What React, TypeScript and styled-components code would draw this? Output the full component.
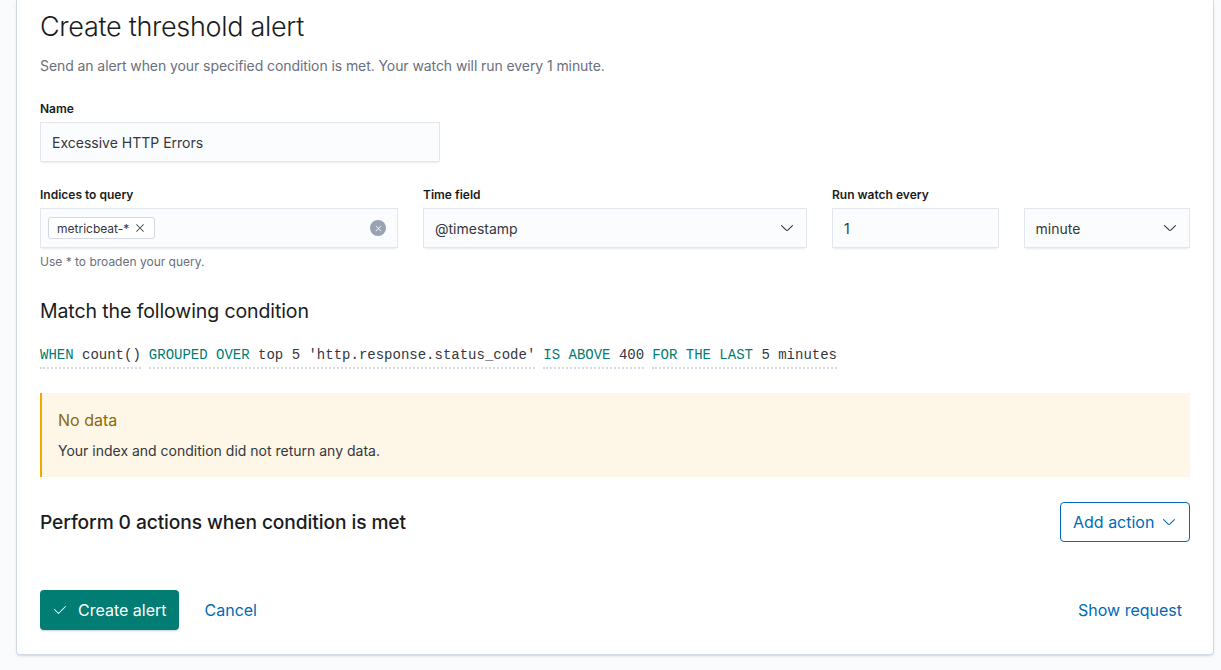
import React from 'react';
import styled, { createGlobalStyle } from 'styled-components';

const GlobalStyle = createGlobalStyle`
  html, body {
    margin: 0;
    padding: 0;
    background: #fafbfd;
  }
  body {
    font-family: Inter, 'Noto Sans', 'Liberation Sans', sans-serif;
    color: #343741;
    -webkit-font-smoothing: antialiased;
  }
  * {
    box-sizing: border-box;
  }
`;

const Page = styled.div`
  padding: 0 7px 16px 16px;
`;

const Panel = styled.div`
  background: #fff;
  border: 1px solid #d3dae6;
  border-top: none;
  border-radius: 0 0 4px 4px;
  box-shadow: 0 2px 2px -1px rgba(152, 162, 179, 0.3), 0 1px 5px -2px rgba(152, 162, 179, 0.3);
  padding: 9px 23px 24px 23px;
`;

const Title = styled.h1`
  margin: 0;
  font-size: 27px;
  line-height: 36px;
  font-weight: 300;
  color: #1a1c21;
  letter-spacing: -0.3px;
`;

const Subtitle = styled.p`
  margin: 10px 0 0 0;
  font-size: 14px;
  line-height: 21px;
  color: #69707d;
  letter-spacing: -0.08px;
`;

const FormRow = styled.div<{ $top: number; $width?: number }>`
  margin-top: ${p => p.$top}px;
  width: ${p => (p.$width ? `${p.$width}px` : 'auto')};
  display: flex;
  flex-direction: column;
`;

const Label = styled.label`
  font-size: 12px;
  line-height: 18px;
  font-weight: 600;
  color: #1a1c21;
  margin-bottom: 4px;
`;

const Field = styled.div`
  height: 40px;
  background: #fbfcfd;
  box-shadow: 0 1px 1px -1px rgba(152, 162, 179, 0.2), 0 3px 2px -2px rgba(152, 162, 179, 0.2),
    inset 0 0 0 1px rgba(15, 39, 118, 0.1);
  display: flex;
  align-items: center;
  padding: 0 12px;
  font-size: 14px;
  color: #343741;
  gap: 8px;
`;

const FieldText = styled.span`
  flex: 1;
  white-space: nowrap;
`;

const Combo = styled(Field)`
  padding: 0 12px 0 8px;
`;

const Pill = styled.span`
  display: inline-flex;
  align-items: center;
  height: 22px;
  padding: 0 8px;
  gap: 5px;
  background: #fff;
  border: 1px solid #d3dae6;
  border-radius: 3px;
  font-size: 12px;
  color: #343741;
`;

const ClearButton = styled.span`
  width: 16px;
  height: 16px;
  border-radius: 50%;
  background: #98a2b3;
  display: inline-flex;
  align-items: center;
  justify-content: center;
`;

const HelpText = styled.div`
  margin-top: 6px;
  font-size: 12px;
  line-height: 16px;
  color: #69707d;
`;

const FieldGrid = styled.div`
  margin-top: 24px;
  display: grid;
  grid-template-columns: 358px 384px 1fr;
  column-gap: 25px;
  align-items: start;
`;

const PairGrid = styled.div`
  display: grid;
  grid-template-columns: 1fr 1fr;
  column-gap: 25px;
`;

const SectionTitle = styled.h2<{ $top: number; $weight: number; $size: number }>`
  margin: ${p => p.$top}px 0 0 0;
  font-size: ${p => p.$size}px;
  line-height: 24px;
  font-weight: ${p => p.$weight};
  color: #1a1c21;
  letter-spacing: -0.1px;
`;

const Expression = styled.div`
  margin-top: 22px;
  display: flex;
  font-family: 'Liberation Mono', 'DejaVu Sans Mono', monospace;
  font-size: 14px;
  line-height: 20px;
`;

const ExprItem = styled.span`
  display: inline-block;
  margin-right: 8px;
  padding-bottom: 2px;
  border-bottom: 2px dotted #d3dae6;
  white-space: pre;
  color: #343741;
`;

const Keyword = styled.span`
  color: #017d73;
`;

const Callout = styled.div`
  margin-top: 24px;
  background: #fef6e6;
  border-left: 2px solid #f5a700;
  padding: 15px 16px 16px 16px;
`;

const CalloutTitle = styled.div`
  font-size: 16px;
  line-height: 24px;
  color: #8a6a0a;
  font-weight: 400;
`;

const CalloutBody = styled.div`
  margin-top: 8px;
  font-size: 14px;
  line-height: 21px;
  color: #343741;
`;

const ActionsRow = styled.div`
  margin-top: 25px;
  display: flex;
  align-items: center;
  justify-content: space-between;
`;

const OutlineButton = styled.button`
  height: 40px;
  width: 130px;
  border: 1px solid #006bb4;
  border-radius: 4px;
  background: #fff;
  color: #006bb4;
  font-family: inherit;
  font-size: 16px;
  padding: 0 12px;
  display: flex;
  align-items: center;
  justify-content: space-between;
`;

const Footer = styled.div`
  margin-top: 48px;
  display: flex;
  align-items: center;
  justify-content: space-between;
`;

const FooterLeft = styled.div`
  display: flex;
  align-items: center;
  gap: 18px;
`;

const PrimaryButton = styled.button`
  height: 40px;
  border: none;
  border-radius: 4px;
  background: #017d73;
  color: #fff;
  font-family: inherit;
  font-size: 16px;
  white-space: nowrap;
  padding: 0 12px;
  display: flex;
  align-items: center;
  gap: 10px;
  box-shadow: 0 2px 2px -1px rgba(54, 97, 126, 0.3);
`;

const LinkButton = styled.button`
  height: 40px;
  border: none;
  background: transparent;
  color: #006bb4;
  font-family: inherit;
  font-size: 16px;
  white-space: nowrap;
  padding: 0 8px;
`;

const ArrowDown = ({ color = '#343741' }: { color?: string }) => (
  <svg width="16" height="16" viewBox="0 0 16 16" fill={color}>
    <path d="M13.069 5.157L8.384 9.768a.546.546 0 01-.768 0L2.93 5.158a.552.552 0 00-.771 0 .53.53 0 000 .759l4.684 4.61c.641.631 1.672.63 2.312 0l4.684-4.61a.53.53 0 000-.76.552.552 0 00-.771 0z" />
  </svg>
);

const Cross = ({ size, color }: { size: number; color: string }) => (
  <svg width={size} height={size} viewBox="0 0 16 16" fill={color}>
    <path d="M7.293 8L3.146 3.854a.5.5 0 11.708-.708L8 7.293l4.146-4.147a.5.5 0 01.708.708L8.707 8l4.147 4.146a.5.5 0 01-.708.708L8 8.707l-4.146 4.147a.5.5 0 01-.708-.708L7.293 8z" />
  </svg>
);

const Check = () => (
  <svg width="16" height="16" viewBox="0 0 16 16" fill="#fff">
    <path d="M6.5 12a.502.502 0 01-.354-.146l-4-4a.502.502 0 01.708-.708L6.5 10.793l6.646-6.647a.502.502 0 01.708.708l-7 7A.502.502 0 016.5 12" />
  </svg>
);

const expression = [
  { keyword: 'WHEN', value: 'count()' },
  { keyword: 'GROUPED OVER', value: "top 5 'http.response.status_code'" },
  { keyword: 'IS ABOVE', value: '400' },
  { keyword: 'FOR THE LAST', value: '5 minutes' },
];

export default function App() {
  return (
    <Page>
      <GlobalStyle />
      <Panel>
        <Title>Create threshold alert</Title>
        <Subtitle>Send an alert when your specified condition is met. Your watch will run every 1 minute.</Subtitle>

        <FormRow $top={24} $width={400}>
          <Label>Name</Label>
          <Field>
            <FieldText>Excessive HTTP Errors</FieldText>
          </Field>
        </FormRow>

        <FieldGrid>
          <FormRow $top={0}>
            <Label>Indices to query</Label>
            <Combo>
              <FieldText>
                <Pill>
                  metricbeat-*
                  <Cross size={12} color="#343741" />
                </Pill>
              </FieldText>
              <ClearButton>
                <Cross size={9} color="#fff" />
              </ClearButton>
            </Combo>
            <HelpText>Use * to broaden your query.</HelpText>
          </FormRow>
          <FormRow $top={0}>
            <Label>Time field</Label>
            <Field>
              <FieldText>@timestamp</FieldText>
              <ArrowDown />
            </Field>
          </FormRow>
          <FormRow $top={0}>
            <Label>Run watch every</Label>
            <PairGrid>
              <Field>
                <FieldText>1</FieldText>
              </Field>
              <Field>
                <FieldText>minute</FieldText>
                <ArrowDown />
              </Field>
            </PairGrid>
          </FormRow>
        </FieldGrid>

        <SectionTitle $top={29} $weight={400} $size={19.5}>
          Match the following condition
        </SectionTitle>
        <Expression>
          {expression.map(e => (
            <ExprItem key={e.keyword}>
              <Keyword>{e.keyword}</Keyword> {e.value}
            </ExprItem>
          ))}
        </Expression>

        <Callout>
          <CalloutTitle>No data</CalloutTitle>
          <CalloutBody>Your index and condition did not return any data.</CalloutBody>
        </Callout>

        <ActionsRow>
          <SectionTitle $top={0} $weight={500} $size={19.2}>
            Perform 0 actions when condition is met
          </SectionTitle>
          <OutlineButton>
            Add action
            <ArrowDown color="#006bb4" />
          </OutlineButton>
        </ActionsRow>

        <Footer>
          <FooterLeft>
            <PrimaryButton>
              <Check />
              Create alert
            </PrimaryButton>
            <LinkButton>Cancel</LinkButton>
          </FooterLeft>
          <LinkButton>Show request</LinkButton>
        </Footer>
      </Panel>
    </Page>
  );
}
